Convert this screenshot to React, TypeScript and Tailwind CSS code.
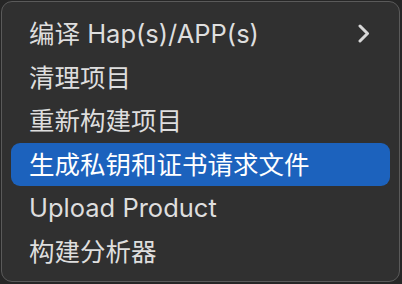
import React from "react";

const items = [
  { label: "编译 Hap(s)/APP(s)", sub: true },
  { label: "清理项目" },
  { label: "重新构建项目" },
  { label: "生成私钥和证书请求文件", active: true },
  { label: "Upload Product" },
  { label: "构建分析器" },
];

export default function App() {
  return (
    <div className="w-[402px] h-[284px] bg-[#262626] overflow-hidden">
      <div
        className="ml-px mt-px w-[399px] h-[281px] rounded-[11px] border border-[#5a5a5a] bg-[#303030] pt-[10px] px-[9px] flex flex-col"
        style={{ fontFamily: 'Inter, "Noto Sans CJK SC", sans-serif' }}
      >
        {items.map((it) => (
          <div
            key={it.label}
            className={
              "h-[43.6px] shrink-0 flex items-center justify-between rounded-[9px] pl-[18px] pr-[19px] text-[25.5px] leading-none " +
              (it.active ? "bg-[#1c62bd] text-white" : "text-[#dedede]")
            }
          >
            <span>{it.label}</span>
            {it.sub && (
              <svg width="12" height="19" viewBox="0 0 12 19" className="mr-[1px]">
                <path
                  d="M2 2 L9.5 9.5 L2 17"
                  fill="none"
                  stroke="#d8d8d8"
                  strokeWidth="3"
                  strokeLinecap="round"
                  strokeLinejoin="round"
                />
              </svg>
            )}
          </div>
        ))}
      </div>
    </div>
  );
}
